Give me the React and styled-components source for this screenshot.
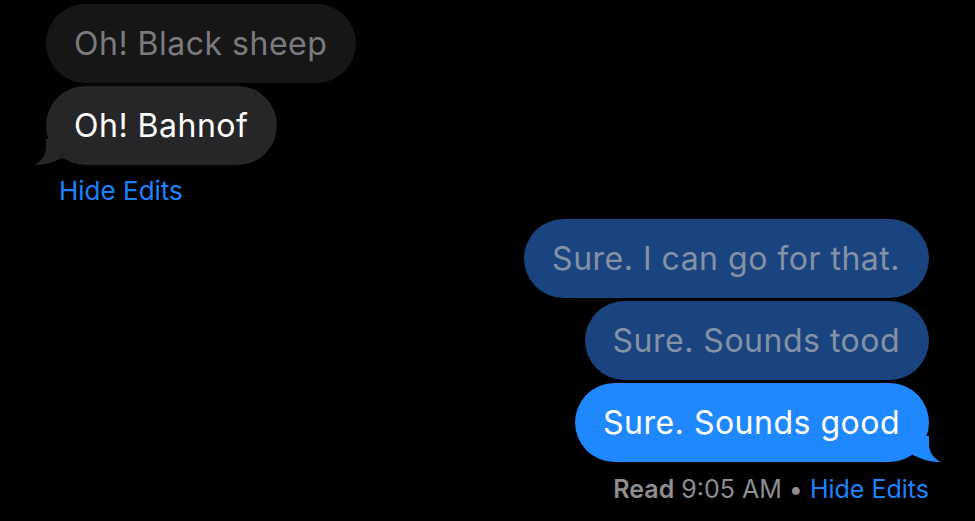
import React from "react";
import styled, { createGlobalStyle } from "styled-components";

const GlobalStyle = createGlobalStyle`
  html, body {
    margin: 0;
    padding: 0;
    background: #000000;
  }
  body {
    font-family: Inter, "Noto Sans", "Liberation Sans", sans-serif;
    -webkit-font-smoothing: antialiased;
  }
`;

const Thread = styled.div`
  width: 975px;
  height: 521px;
  overflow: hidden;
  background: #000000;
  display: flex;
  flex-direction: column;
  padding: 4px 46px 0 46px;
  box-sizing: border-box;
`;

const Group = styled.div`
  display: flex;
  flex-direction: column;
  align-items: ${(p) => (p.$mine ? "flex-end" : "flex-start")};
  gap: 3px;
  margin-top: ${(p) => p.$top || 0}px;
`;

const palette = {
  grayOld: { bg: "#161617", fg: "#7b7b7f" },
  gray: { bg: "#262628", fg: "#ffffff" },
  blueOld: { bg: "#1a4480", fg: "#8591a4" },
  blue: { bg: "#1f88fe", fg: "#ffffff" },
};

const Bubble = styled.div`
  position: relative;
  height: 79px;
  box-sizing: border-box;
  padding: 0 29px 0 28px;
  border-radius: 40px;
  display: flex;
  align-items: center;
  font-size: 32px;
  letter-spacing: 0.5px;
  white-space: nowrap;
  background: ${(p) => palette[p.$tone].bg};
  color: ${(p) => palette[p.$tone].fg};
`;

const TailSvg = styled.svg`
  position: absolute;
  bottom: 0;
  ${(p) => (p.$mine ? "right: -12px; transform: scaleX(-1);" : "left: -12px;")}
`;

const Tail = ({ color, mine }) => (
  <TailSvg $mine={mine} width="30" height="26" viewBox="0 0 30 26">
    <path
      d="M12 0 L12 8 C12 16 7 23 0 26 C9 26.5 18 24 28 19 L28 0 Z"
      fill={color}
    />
  </TailSvg>
);

const Meta = styled.div`
  margin-top: ${(p) => p.$top}px;
  padding: ${(p) => (p.$mine ? "0" : "0 0 0 13px")};
  font-size: ${(p) => p.$size}px;
  line-height: ${(p) => p.$size + 5}px;
  color: #8e8e93;
  white-space: nowrap;
  align-self: ${(p) => (p.$mine ? "flex-end" : "flex-start")};
`;

const Strong = styled.span`
  font-weight: 600;
`;

const Link = styled.span`
  color: #1a84ff;
`;

const Dot = styled.span`
  margin: 0 7px;
`;

export default function App() {
  return (
    <>
      <GlobalStyle />
      <Thread>
        <Group>
          <Bubble $tone="grayOld">Oh! Black sheep</Bubble>
          <Bubble $tone="gray">
            Oh! Bahnof
            <Tail color={palette.gray.bg} />
          </Bubble>
        </Group>
        <Meta $top={10} $size={26}>
          <Link>Hide Edits</Link>
        </Meta>
        <Group $mine $top={13}>
          <Bubble $tone="blueOld">Sure. I can go for that.</Bubble>
          <Bubble $tone="blueOld">Sure. Sounds tood</Bubble>
          <Bubble $tone="blue">
            Sure. Sounds good
            <Tail mine color={palette.blue.bg} />
          </Bubble>
        </Group>
        <Meta $mine $top={12} $size={25}>
          <Strong>Read</Strong> 9:05 AM<Dot>•</Dot>
          <Link>Hide Edits</Link>
        </Meta>
      </Thread>
    </>
  );
}
